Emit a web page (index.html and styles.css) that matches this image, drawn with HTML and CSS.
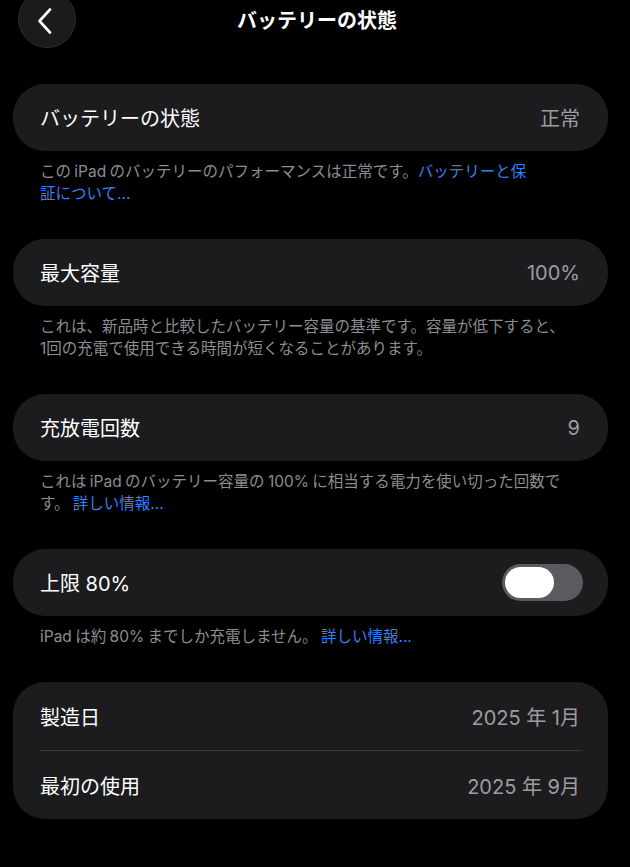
FILE: index.html
```html
<!DOCTYPE html>
<html lang="ja">
<head>
  <meta charset="UTF-8">
  <meta name="viewport" content="width=device-width, initial-scale=1.0">
  <title>バッテリーの状態</title>
  <link rel="stylesheet" href="styles.css">
</head>
<body>

<!-- Top bar -->
<header class="top-bar">
  <a class="back-button" href="#" aria-label="戻る">
    <svg width="16" height="26" viewBox="0 0 16 26">
      <path d="M13 1.5 L2.5 13 L13 24.5" fill="none" stroke="#ffffff" stroke-width="2.6" stroke-linecap="round" stroke-linejoin="round"/>
    </svg>
  </a>
  <h1 class="page-title">バッテリーの状態</h1>
  <div class="top-spacer"></div>
</header>

<main class="settings">

  <section class="group">
    <div class="card">
      <div class="row">
        <span class="label">バッテリーの状態</span>
        <span class="value">正常</span>
      </div>
    </div>
    <p class="note">この iPad のバッテリーのパフォーマンスは正常です。<a href="#">バッテリーと保<br>証について...</a></p>
  </section>

  <section class="group">
    <div class="card">
      <div class="row">
        <span class="label">最大容量</span>
        <span class="value">100%</span>
      </div>
    </div>
    <p class="note">これは、新品時と比較したバッテリー容量の基準です。容量が低下すると、<br>1回の充電で使用できる時間が短くなることがあります。</p>
  </section>

  <section class="group">
    <div class="card">
      <div class="row">
        <span class="label">充放電回数</span>
        <span class="value">9</span>
      </div>
    </div>
    <p class="note">これは iPad のバッテリー容量の 100% に相当する電力を使い切った回数で<br>す。 <a href="#">詳しい情報...</a></p>
  </section>

  <section class="group">
    <div class="card">
      <div class="row row-toggle">
        <span class="label">上限 80%</span>
        <span class="toggle"><span class="knob"></span></span>
      </div>
    </div>
    <p class="note">iPad は約 80% までしか充電しません。 <a href="#">詳しい情報...</a></p>
  </section>

  <section class="group">
    <div class="card card-list">
      <div class="row">
        <span class="label">製造日</span>
        <span class="value">2025 年 1月</span>
      </div>
      <div class="divider"></div>
      <div class="row">
        <span class="label">最初の使用</span>
        <span class="value">2025 年 9月</span>
      </div>
    </div>
  </section>

</main>

</body>
</html>
```

FILE: styles.css
```css
body {
  margin: 0;
  background-color: #000000;
  color: #ffffff;
  font-family: "Inter", "Noto Sans CJK JP", sans-serif;
  overflow: hidden;
}

/* Top bar */
.top-bar {
  display: grid;
  grid-template-columns: 58px 1fr 58px;
  align-items: center;
  height: 58px;
  margin-top: -10px;
  padding: 0 18px;
}

.back-button {
  display: flex;
  justify-content: center;
  align-items: center;
  width: 58px;
  height: 58px;
  box-sizing: border-box;
  border-radius: 50%;
  background-color: #1b1b1d;
  border: 1px solid #2c2c2f;
  padding-top: 4px;
  padding-right: 4px;
}

.page-title {
  margin: 0;
  font-size: 20px;
  font-weight: 700;
  text-align: center;
  padding-left: 4px;
}

/* Groups */
.settings {
  padding: 36px 22px 0 13px;
}

.group {
  margin-bottom: 34px;
}

.card {
  background-color: #1c1c1e;
  border-radius: 32px;
}

.row {
  display: flex;
  justify-content: space-between;
  align-items: center;
  height: 67px;
  padding: 0 28px 0 27px;
}

.card-list .row {
  height: 68px;
}

.label {
  font-size: 20px;
  color: #ffffff;
}

.value {
  font-size: 20px;
  color: #9c9ca1;
}

.divider {
  height: 1px;
  margin: 0 27px;
  background-color: #38383b;
}

.note {
  margin: 10px 0 0;
  padding: 0 0 0 27px;
  font-size: 15.5px;
  line-height: 22px;
  color: #8d8d92;
  white-space: nowrap;
  word-spacing: -1px;
}

.note a {
  color: #3a7fec;
  text-decoration: none;
}

/* Toggle */
.row-toggle {
  padding-right: 25px;
}

.toggle {
  display: flex;
  align-items: center;
  width: 81px;
  height: 37px;
  padding: 0 3px;
  box-sizing: border-box;
  border-radius: 19px;
  background-color: #5a5a5f;
}

.knob {
  width: 49px;
  height: 31px;
  border-radius: 16px;
  background-color: #ffffff;
}
```
